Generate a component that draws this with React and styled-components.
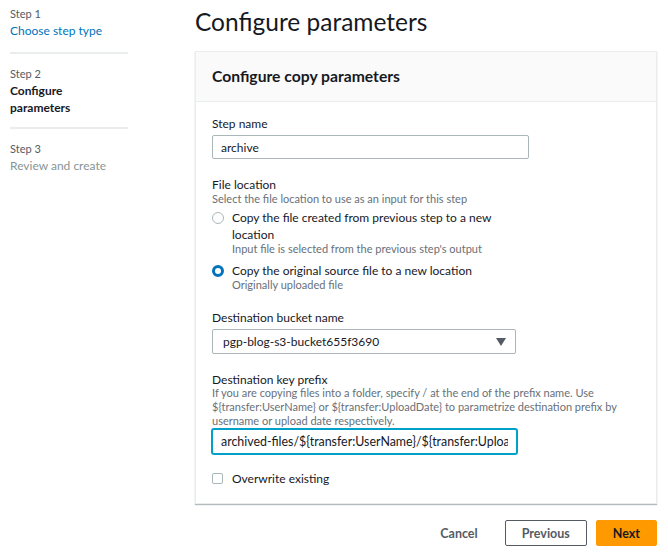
import React, { useState } from "react";
import styled, { createGlobalStyle } from "styled-components";

const GlobalStyle = createGlobalStyle`
  html, body {
    margin: 0;
    padding: 0;
    background: #fff;
    font-family: "Lato", "Liberation Sans", sans-serif;
    color: #16191f;
  }
  * { box-sizing: border-box; }
`;

const Page = styled.div`
  display: flex;
  padding: 7px 11px 0 10px;
  width: 668px;
  height: 554px;
`;

const Sidebar = styled.nav`
  width: 118px;
  flex-shrink: 0;
`;

const StepItem = styled.div`
  padding: 13px 0 11px;
  border-bottom: ${(p) => (p.last ? "none" : "2px solid #eaeded")};
  &:first-child { padding-top: 0; padding-bottom: 13px; }
`;

const StepNum = styled.div`
  font-size: 11px;
  line-height: 14px;
  color: #545b64;
`;

const StepTitle = styled.div`
  font-size: 12px;
  line-height: 17px;
  margin-top: 1px;
  font-weight: ${(p) => (p.active ? 700 : 400)};
  color: ${(p) => (p.active ? "#16191f" : p.link ? "#0073bb" : "#879596")};
`;

const Main = styled.main`
  margin-left: 67px;
  flex: 1;
  display: flex;
  flex-direction: column;
`;

const Heading = styled.h1`
  margin: 0;
  font-size: 24.5px;
  font-weight: 400;
  line-height: 30px;
`;

const Card = styled.section`
  margin-top: 14px;
  border: 1px solid #eaeded;
  box-shadow: 0 1px 1px rgba(0, 28, 36, 0.3);
  background: #fff;
`;

const CardHeader = styled.div`
  background: #fafafa;
  border-bottom: 1px solid #eaeded;
  padding: 14px 16px 15px;
`;

const CardTitle = styled.h2`
  margin: 0;
  font-size: 15.7px;
  font-weight: 700;
  line-height: 20px;
`;

const CardBody = styled.div`
  padding: 14px 16px 16px;
  display: flex;
  flex-direction: column;
  gap: 18px;
`;

const Field = styled.div`
  display: flex;
  flex-direction: column;
`;

const Label = styled.label`
  font-size: 12px;
  line-height: 15px;
  color: #16191f;
`;

const Desc = styled.div`
  font-size: 11px;
  line-height: 14px;
  color: #687078;
  margin-top: ${(p) => p.mt || 0}px;
`;

const TextInput = styled.input`
  margin-top: ${(p) => p.gap || 4}px;
  width: ${(p) => p.w}px;
  height: ${(p) => p.h || 24}px;
  border: 1px solid ${(p) => (p.focus ? "#00a1c9" : "#aab7b8")};
  box-shadow: ${(p) => (p.focus ? "0 0 0 1px #00a1c9" : "none")};
  border-radius: 2px;
  padding: 0 8px;
  font-family: inherit;
  font-size: ${(p) => p.fs || 12}px;
  color: #16191f;
  outline: none;
`;

const RadioGroup = styled.div`
  display: flex;
  flex-direction: column;
  gap: 6px;
  margin-top: 3px;
`;

const RadioRow = styled.label`
  display: flex;
  align-items: flex-start;
  gap: 8px;
`;

const RadioDot = styled.span`
  flex-shrink: 0;
  width: 12px;
  height: 12px;
  margin-top: 3px;
  border-radius: 50%;
  border: ${(p) => (p.checked ? "3.5px solid #0073bb" : "1px solid #aab7b8")};
  background: #fff;
`;

const RadioText = styled.div`
  display: flex;
  flex-direction: column;
  width: 270px;
`;

const OptionText = styled.div`
  font-size: 12px;
  line-height: 17px;
`;

const SelectBox = styled.div`
  margin-top: 4px;
  width: 304px;
  height: 25px;
  border: 1px solid #aab7b8;
  border-radius: 2px;
  display: flex;
  align-items: center;
  justify-content: space-between;
  padding: 0 9px 0 10px;
  font-size: 12px;
`;

const Caret = styled.span`
  width: 0;
  height: 0;
  border-left: 5px solid transparent;
  border-right: 5px solid transparent;
  border-top: 8px solid #545b64;
`;

const CheckRow = styled.label`
  display: flex;
  align-items: center;
  gap: 9px;
  margin-top: -2px;
`;

const CheckBox = styled.span`
  width: 11px;
  height: 11px;
  border: 1px solid #aab7b8;
  border-radius: 2px;
`;

const Footer = styled.div`
  display: flex;
  justify-content: flex-end;
  align-items: center;
  gap: 9px;
  margin-top: 16px;
`;

const Button = styled.button`
  height: 26px;
  padding: 0 ${(p) => p.px || 16}px;
  font-family: inherit;
  font-size: 12.5px;
  font-weight: 700;
  border-radius: 2px;
  cursor: pointer;
  border: 1px solid
    ${(p) => (p.variant === "primary" ? "#ff9900" : p.variant === "link" ? "transparent" : "#545b64")};
  background: ${(p) => (p.variant === "primary" ? "#ff9900" : "#fff")};
  color: ${(p) => (p.variant === "primary" ? "#16191f" : "#545b64")};
`;

const steps = [
  { num: "Step 1", title: "Choose step type", link: true },
  { num: "Step 2", title: "Configure parameters", active: true },
  { num: "Step 3", title: "Review and create" },
];

const prefixHelp =
  "If you are copying files into a folder, specify / at the end of the prefix name. Use ${transfer:UserName} or ${transfer:UploadDate} to parametrize destination prefix by username or upload date respectively.";

export default function App() {
  const [choice, setChoice] = useState("original");
  const [name, setName] = useState("archive");
  const [prefix, setPrefix] = useState(
    "archived-files/${transfer:UserName}/${transfer:UploadDate}/"
  );

  return (
    <>
      <GlobalStyle />
      <Page>
        <Sidebar>
          {steps.map((s, i) => (
            <StepItem key={s.num} last={i === steps.length - 1}>
              <StepNum>{s.num}</StepNum>
              <StepTitle active={s.active} link={s.link}>
                {s.active ? (
                  <>
                    Configure
                    <br />
                    parameters
                  </>
                ) : (
                  s.title
                )}
              </StepTitle>
            </StepItem>
          ))}
        </Sidebar>
        <Main>
          <Heading>Configure parameters</Heading>
          <Card>
            <CardHeader>
              <CardTitle>Configure copy parameters</CardTitle>
            </CardHeader>
            <CardBody>
              <Field>
                <Label>Step name</Label>
                <TextInput w={317} value={name} onChange={(e) => setName(e.target.value)} />
              </Field>
              <Field>
                <Label>File location</Label>
                <Desc>Select the file location to use as an input for this step</Desc>
                <RadioGroup>
                  <RadioRow onClick={() => setChoice("previous")}>
                    <RadioDot checked={choice === "previous"} />
                    <RadioText>
                      <OptionText>Copy the file created from previous step to a new location</OptionText>
                      <Desc mt={-1}>Input file is selected from the previous step's output</Desc>
                    </RadioText>
                  </RadioRow>
                  <RadioRow onClick={() => setChoice("original")}>
                    <RadioDot checked={choice === "original"} />
                    <RadioText>
                      <OptionText>Copy the original source file to a new location</OptionText>
                      <Desc mt={-1}>Originally uploaded file</Desc>
                    </RadioText>
                  </RadioRow>
                </RadioGroup>
              </Field>
              <Field>
                <Label>Destination bucket name</Label>
                <SelectBox>
                  <span>pgp-blog-s3-bucket655f3690</span>
                  <Caret />
                </SelectBox>
              </Field>
              <Field>
                <Label>Destination key prefix</Label>
                <Desc mt={-1}>{prefixHelp}</Desc>
                <TextInput
                  w={305}
                  h={25}
                  gap={1}
                  fs={12.4}
                  focus
                  value={prefix}
                  onChange={(e) => setPrefix(e.target.value)}
                />
              </Field>
              <CheckRow>
                <CheckBox />
                <OptionText>Overwrite existing</OptionText>
              </CheckRow>
            </CardBody>
          </Card>
          <Footer>
            <Button variant="link" px={17}>Cancel</Button>
            <Button px={16}>Previous</Button>
            <Button variant="primary" px={16}>Next</Button>
          </Footer>
        </Main>
      </Page>
    </>
  );
}
